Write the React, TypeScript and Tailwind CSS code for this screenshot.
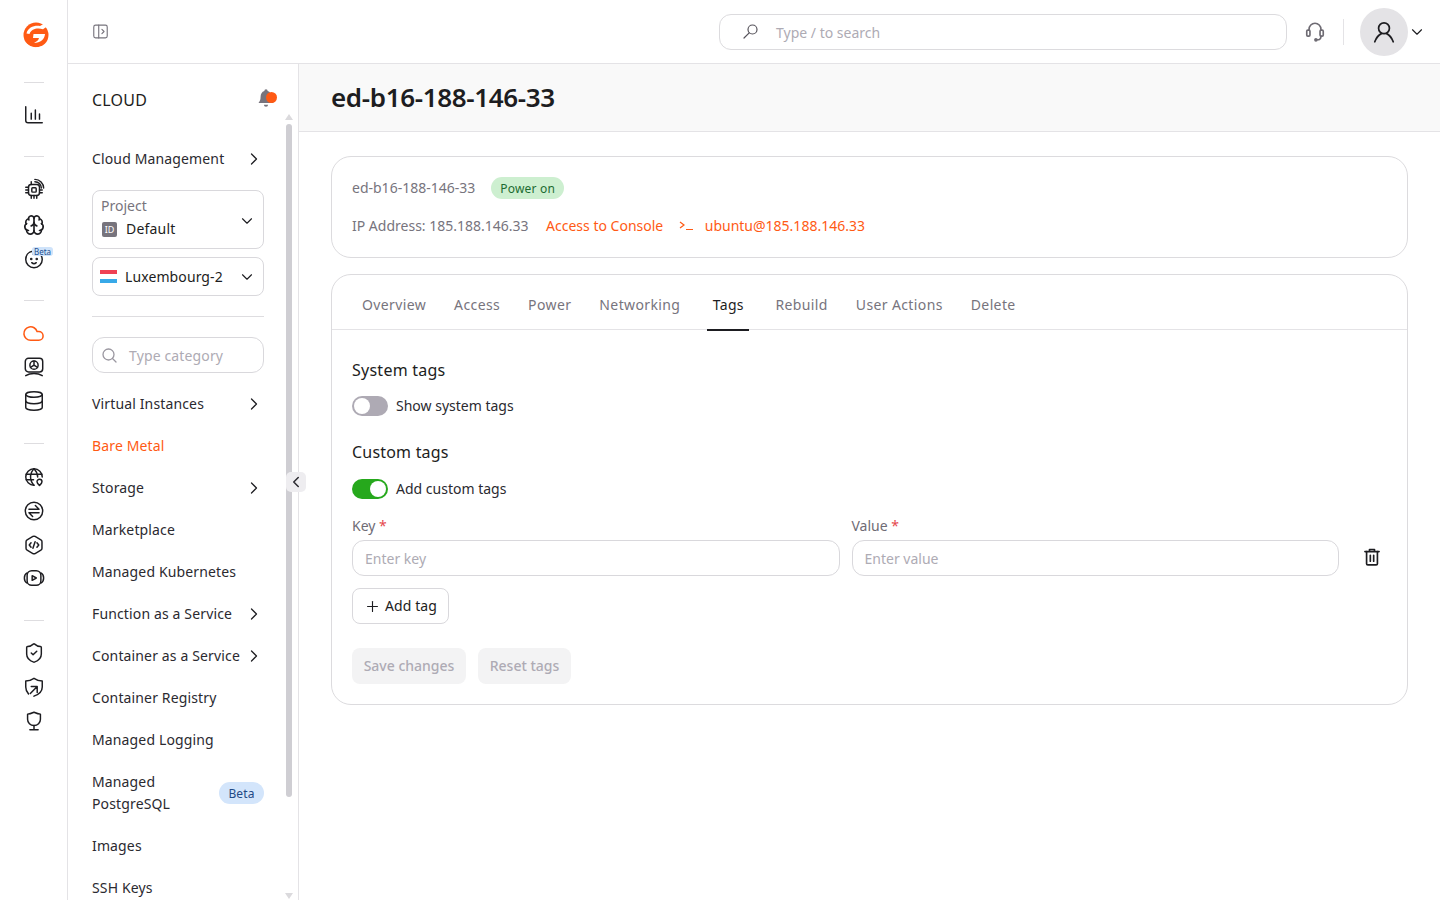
import type { ReactNode } from 'react';
import { Brain, ChevronDown, ChevronLeft, ChevronRight, Cloud, Database, Plus, ShieldCheck } from 'lucide-react';

function Ico({ children, size = 22, className = '' }: { children: ReactNode; size?: number; className?: string }) {
  return (
    <svg width={size} height={size} viewBox="0 0 24 24" fill="none" stroke="currentColor" strokeWidth="1.6" strokeLinecap="round" strokeLinejoin="round" className={className}>
      {children}
    </svg>
  );
}

function Logo() {
  return (
    <svg width="26" height="30" viewBox="0 0 26 30">
      <circle cx="13" cy="15" r="12.5" fill="#ff5a14" />
      <path d="M3.500 13.500 C5 7.500 11 5.200 17 6 L23 2.500 L26 0 L26 5 L20 9.200 C14.500 7.800 8.500 8.500 6.500 14 Z" fill="#fff" />
      <path d="M10.500 14 H22 C21.500 19.500 17.500 23 11 23 C14 21.500 15.500 20 16 18 H10 Z" fill="#fff" />
      <path d="M3 24 C7 28 13 28.500 19 26.500" fill="none" stroke="#fff" strokeWidth="1.100" />
    </svg>
  );
}

const railClass = 'h-[34px] flex items-center justify-center text-[#1d1d21]';

function Sep({ className }: { className: string }) {
  return <div className={`h-px w-5 bg-[#dedde0] ${className}`} />;
}

const items: { label: string; arrow?: boolean; active?: boolean }[] = [
  { label: 'Virtual Instances', arrow: true },
  { label: 'Bare Metal', active: true },
  { label: 'Storage', arrow: true },
  { label: 'Marketplace' },
  { label: 'Managed Kubernetes' },
  { label: 'Function as a Service', arrow: true },
  { label: 'Container as a Service', arrow: true },
  { label: 'Container Registry' },
  { label: 'Managed Logging' },
];

function NavRow({ label, arrow, active }: { label: string; arrow?: boolean; active?: boolean }) {
  return (
    <div className={`h-[42px] flex items-center justify-between text-sm tracking-[0.14px] ${active ? 'text-[#ff5a14]' : 'text-[#2b2a30]'}`}>
      <span>{label}</span>
      {arrow && <ChevronRight size={20} strokeWidth={1.5} className="text-[#1d1d21]" />}
    </div>
  );
}

function Toggle({ on }: { on?: boolean }) {
  return (
    <div className={`w-9 h-5 rounded-full flex items-center px-[2px] ${on ? 'bg-[#26a81c] justify-end' : 'bg-[#aeaab4] justify-start'}`}>
      <div className="w-4 h-4 rounded-full bg-white" />
    </div>
  );
}

function Field({ label, placeholder }: { label: string; placeholder: string }) {
  return (
    <div className="flex-1">
      <div className="h-[22px] text-sm text-[#6f6c75] leading-[22px]">
        {label} <span className="text-[#e5484d]">*</span>
      </div>
      <div className="mt-[3px] h-9 rounded-xl border border-[#d9d8dc] px-3 pt-[2px] flex items-center text-sm text-[#aeabb4]">{placeholder}</div>
    </div>
  );
}

export default function App() {
  const tabs = ['Overview', 'Access', 'Power', 'Networking', 'Tags', 'Rebuild', 'User Actions', 'Delete'];
  return (
    <div className="flex h-screen w-[1440px] overflow-hidden bg-white font-['Noto_Sans',sans-serif]">
      <aside className="w-[68px] shrink-0 border-r border-[#e4e3e6] flex flex-col items-center">
        <div className="mt-[20px] h-[30px] flex items-center justify-center translate-x-[2px]"><Logo /></div>
        <Sep className="mt-[32px]" />
        <div className={`${railClass} mt-[15px]`}>
          <Ico>
            <path d="M3 3V18a2.500 2.500 0 0 0 2.500 2.500H21" />
            <path d="M9 10v6.500M13.500 6.500v10M18 11v5.500" />
          </Ico>
        </div>
        <Sep className="mt-[24px]" />
        <div className={`${railClass} mt-[15px]`}>
          <Ico>
            <rect x="6" y="7" width="12" height="12" rx="3" />
            <rect x="9.600" y="10.600" width="4.800" height="4.800" rx="1" />
            <path d="M3 10h3M3 13h3M3 16h3M9 19v3M12 19v3M15 19v3M9 4v3M21 13h-3M21 16h-3" />
            <path d="M13 4a7 7 0 0 1 7 7M13 1.500a9.500 9.500 0 0 1 9.500 9.500" />
          </Ico>
        </div>
        <div className={`${railClass} mt-[2px]`}><Brain size={22} strokeWidth={1.8} /></div>
        <div className={`${railClass} relative w-full`}>
          <Ico>
            <path d="M10.500 3.500C6 4.200 3 7.800 3 12.500a9 9 0 0 0 18 0c0-2-.6-3.600-1.600-5" />
            <path d="M10.500 3.500a2 2 0 0 1 2.500 1.800c0 1.400-1.600 1.800-2.300.9" />
            <circle cx="9" cy="12" r=".6" fill="currentColor" />
            <circle cx="15" cy="12" r=".6" fill="currentColor" />
            <path d="M9.500 16c1.400 1.200 3.600 1.200 5 0" />
          </Ico>
          <span className="absolute left-[32px] top-[5px] h-[9px] w-[21px] rounded-[3px] bg-[#cfe3fa] text-[8px] leading-[9px] text-center text-[#24508f]">Beta</span>
        </div>
        <Sep className="mt-[24px]" />
        <div className={`${railClass} mt-[15px] !text-[#ff5a14]`}><Cloud size={23} strokeWidth={1.6} /></div>
        <div className={railClass}>
          <Ico>
            <rect x="2.500" y="2.500" width="19" height="15" rx="3.500" />
            <circle cx="12" cy="10" r="4.500" />
            <path d="M12 10V5.500M12 10l-3.800 2.400M12 10l3.800 2.400" />
            <path d="M3 21.500c3-2 5-2.500 9-2.500s6 .5 9 2.500" />
          </Ico>
        </div>
        <div className={railClass}><Database size={22} strokeWidth={1.6} /></div>
        <Sep className="mt-[25px]" />
        <div className={`${railClass} mt-[16px]`}>
          <Ico>
            <path d="M12 21a9 9 0 1 1 9-9" />
            <path d="M3.500 9h17M3.500 15h8M12 3c-5 5-5 13 0 18M12 3c2.600 2.600 3.900 5.800 4 9" />
            <path d="M18 14.500a2.700 2.700 0 0 1 2.700 2.700c0 1.600-1.600 3-2.700 4-1.100-1-2.700-2.400-2.700-4a2.700 2.700 0 0 1 2.700-2.700Z" />
          </Ico>
        </div>
        <div className={railClass}>
          <Ico>
            <circle cx="12" cy="12" r="9.500" />
            <path d="M6.500 10h11l-4-4M17.500 14h-11l4 4" />
          </Ico>
        </div>
        <div className={railClass}>
          <Ico>
            <path d="M10.800 2.700a2.400 2.400 0 0 1 2.400 0l6.300 3.600A2.400 2.400 0 0 1 20.700 8.400v7.200a2.400 2.400 0 0 1-1.200 2.100l-6.300 3.600a2.400 2.400 0 0 1-2.400 0l-6.300-3.600a2.400 2.400 0 0 1-1.200-2.100V8.400a2.400 2.400 0 0 1 1.200-2.100Z" />
            <path d="M8.800 9.500L6.800 12l2 2.500M15.200 9.500l2 2.500-2 2.500M13.200 8.500l-2.400 7" />
          </Ico>
        </div>
        <div className={`${railClass} -mt-px`}>
          <Ico>
            <rect x="4.500" y="4" width="15" height="16" rx="5" />
            <path d="M4.500 6.500C2.500 7.500 1.500 9.500 1.500 12s1 4.500 3 5.500M19.500 6.500c2 1 3 3 3 5.500s-1 4.500-3 5.500" />
            <path d="M10 9.500l4.500 2.500-4.500 2.500Z" />
          </Ico>
        </div>
        <Sep className="mt-[25px]" />
        <div className={`${railClass} mt-[15px]`}><ShieldCheck size={22} strokeWidth={1.6} /></div>
        <div className={railClass}>
          <Ico>
            <path d="M6 19.500C4 17.500 3 15 3 12V5.500C6 5.500 9 4.500 12 2.500c3 2 6 3 9 3V12c0 5-3.500 8-9 10" />
            <path d="M8 19l7.500-7.500M9 11.500h6.500V18" />
          </Ico>
        </div>
        <div className={railClass}>
          <Ico>
            <path d="M12 2.500c3.500 1.500 5.500 2 7 2v5.500c0 4-3 7-7 7s-7-3-7-7V4.500c1.500 0 3.500-.5 7-2Z" />
            <path d="M12 17v4M7.500 21.500h9" />
          </Ico>
        </div>
      </aside>

      <div className="flex-1 min-w-0 flex flex-col">
        <header className="h-[64px] shrink-0 border-b border-[#e4e3e6] flex items-center">
          <div className="ml-[24px] text-[#77747d]">
            <Ico size={17}>
              <rect x="2.500" y="3" width="19" height="18" rx="2.500" />
              <path d="M9.500 3v18M14 9l3 3-3 3" />
            </Ico>
          </div>
          <div className="ml-[610px] w-[568px] h-9 rounded-xl border border-[#dcdbde] flex items-center">
            <svg width="17" height="17" viewBox="0 0 17 17" fill="none" stroke="#55525a" strokeWidth="1.200" strokeLinecap="round" className="ml-[22px]">
              <circle cx="10.500" cy="6.500" r="4.500" />
              <path d="M7.200 9.800L2 15" />
            </svg>
            <span className="ml-[17px] pt-[2px] text-sm text-[#aeabb4]">Type / to search</span>
          </div>
          <div className="ml-[17px] text-[#6e6b73]">
            <Ico size={22}>
              <path d="M5.500 10V9a6.500 6.500 0 0 1 13 0v1" strokeWidth="1.800" />
              <rect x="3" y="10" width="3.500" height="6.500" rx="1.200" strokeWidth="1.800" />
              <rect x="17.500" y="10" width="3.500" height="6.500" rx="1.200" strokeWidth="1.800" />
              <path d="M18.500 16.500c0 2.500-1.500 4-4 4" strokeWidth="1.800" />
              <circle cx="13" cy="20.500" r="1.200" fill="currentColor" />
            </Ico>
          </div>
          <div className="ml-[17px] h-[26px] w-px bg-[#e4e3e6]" />
          <div className="ml-[16px] h-12 w-12 rounded-full bg-[#e4e3e6] flex items-center justify-center text-[#1d1d21]">
            <Ico size={26}>
              <circle cx="12" cy="8.500" r="5" />
              <path d="M3.500 21c1.500-4 4-6.500 6-7.500M20.500 21c-1.500-4-4-6.500-6-7.500" />
            </Ico>
          </div>
          <ChevronDown size={18} strokeWidth={1.5} className="text-[#1d1d21]" />
        </header>

        <div className="flex-1 min-h-0 flex">
          <nav className="relative w-[231px] shrink-0 border-r border-[#e4e3e6]">
            <div className="h-full overflow-hidden pl-[24px] pr-[34px]">
              <div className="h-[74px] flex items-center justify-between">
                <span className="text-base tracking-[0.2px] text-[#1d1d21] mb-[2px]">CLOUD</span>
                <span className="relative mr-[-12px] mt-[-6px] text-[#77747d]">
                  <svg width="20" height="20" viewBox="0 0 24 24" fill="currentColor">
                    <path d="M12 1.500a2 2 0 0 1 2 2c3 1 4.500 3.500 4.500 7 0 4 1 5.500 2.500 7.500H3c1.500-2 2.500-3.500 2.500-7.500 0-3.500 1.500-6 4.500-7a2 2 0 0 1 2-2ZM9.500 20h5a2.500 2.500 0 0 1-5 0Z" />
                  </svg>
                  <span className="absolute left-[10px] top-[4px] h-[11px] w-[11px] rounded-full bg-[#ff5a14]" />
                </span>
              </div>
              <div className="h-[42px] flex items-center justify-between text-sm tracking-[0.14px] text-[#2b2a30]">
                <span>Cloud Management</span>
                <ChevronRight size={20} strokeWidth={1.5} className="text-[#1d1d21]" />
              </div>
              <div className="mt-[10px] h-[59px] rounded-lg border border-[#d9d8dc] pl-2 pr-[7px] flex items-center justify-between">
                <div className="mb-[4px]">
                  <div className="text-sm leading-[20px] text-[#77747d]">Project</div>
                  <div className="mt-[3px] flex items-center text-sm leading-[20px] tracking-[0.2px] text-[#1d1d21]">
                    <span className="ml-px w-[15px] h-[15px] rounded-[2px] bg-[#77747d] text-white text-[9px] leading-[15px] text-center tracking-normal">ID</span>
                    <span className="ml-[9px]">Default</span>
                  </div>
                </div>
                <ChevronDown size={18} strokeWidth={1.5} className="text-[#1d1d21] mt-[2px]" />
              </div>
              <div className="mt-2 h-[39px] rounded-lg border border-[#d9d8dc] pl-2 pr-[7px] flex items-center justify-between">
                <div className="flex items-center text-sm tracking-[0.1px] text-[#1d1d21]">
                  <span className="-ml-px w-[17px] flex flex-col">
                    <span className="h-[4px] bg-[#ef4154]" />
                    <span className="h-[5px] bg-white" />
                    <span className="h-[4px] bg-[#38a9e8]" />
                  </span>
                  <span className="ml-2">Luxembourg-2</span>
                </div>
                <ChevronDown size={18} strokeWidth={1.5} className="text-[#1d1d21]" />
              </div>
              <div className="mt-5 h-px bg-[#dedde0]" />
              <div className="mt-5 h-9 rounded-xl border border-[#d9d8dc] flex items-center text-sm tracking-[0.14px] text-[#aeabb4]">
                <svg width="17" height="17" viewBox="0 0 17 17" fill="none" stroke="#9a97a0" strokeWidth="1.300" strokeLinecap="round" className="ml-[8px]">
                  <circle cx="7.500" cy="7.500" r="5.500" />
                  <path d="M11.500 11.500L15 15" />
                </svg>
                <span className="ml-[11px] pt-[2px]">Type category</span>
              </div>
              <div className="mt-[10px]">
                {items.map((item) => (
                  <NavRow key={item.label} {...item} />
                ))}
                <div className="h-[64px] flex items-center justify-between text-sm leading-[22px] tracking-[0.14px] text-[#2b2a30]">
                  <span>
                    Managed
                    <br />
                    PostgreSQL
                  </span>
                  <span className="h-[22px] w-[45px] rounded-full bg-[#d3e5fb] text-xs leading-[24px] text-center text-[#1f4a86]">Beta</span>
                </div>
                <NavRow label="Images" />
                <NavRow label="SSH Keys" />
              </div>
            </div>
            <div className="absolute left-[218px] top-[60px] h-[673px] w-[6px] rounded-full bg-[#cfced3]" />
            <div className="absolute left-[217px] top-[50px] h-0 w-0 border-x-4 border-b-[6px] border-x-transparent border-b-[#dbdadd]" />
            <div className="absolute left-[217px] top-[829px] h-0 w-0 border-x-4 border-t-[6px] border-x-transparent border-t-[#dbdadd]" />
            <div className="absolute left-[218px] top-[408px] h-[20px] w-[20px] rounded-[5px] bg-[#eeedf0] flex items-center justify-center text-[#2b2a30]">
              <ChevronLeft size={18} strokeWidth={2} />
            </div>
          </nav>

          <main className="flex-1 min-w-0">
            <div className="h-[68px] bg-[#f9f9f9] border-b border-[#e4e3e6] px-8 flex items-center">
              <h1 className="text-[26px] font-semibold text-[#1d1d21] tracking-[-0.35px] mt-[-1px]">ed-b16-188-146-33</h1>
            </div>
            <div className="px-8 pt-6">
              <section className="h-[102px] rounded-[20px] border border-[#dcdbde] px-5 pt-[20px]">
                <div className="flex items-center h-[22px] text-sm text-[#77747d]">
                  <span>ed-b16-188-146-33</span>
                  <span className="ml-4 h-[22px] rounded-full bg-[#cdefd0] px-[9px] text-xs leading-[24px] tracking-[0.2px] text-[#1c6b32]">Power on</span>
                </div>
                <div className="mt-4 flex items-center h-[22px] text-sm text-[#77747d]">
                  <span>IP Address: 185.188.146.33</span>
                  <span className="ml-[17.500px] text-[#ff5a14]">Access to Console</span>
                  <svg width="16" height="16" viewBox="0 0 16 16" fill="none" stroke="#ff5a14" strokeWidth="1.200" className="ml-[16px]">
                    <path d="M1 4l4 3-4 3M7 11.500h7" />
                  </svg>
                  <span className="ml-[9.500px] text-[#ff5a14]">ubuntu@185.188.146.33</span>
                </div>
              </section>

              <section className="mt-4 h-[431px] rounded-[20px] border border-[#dcdbde]">
                <div className="h-[55px] border-b border-[#e4e3e6] pl-[30px] flex gap-[28px]">
                  {tabs.map((t) =>
                    t === 'Tags' ? (
                      <div key={t} className="relative -ml-[1px] -mr-[2px] px-[5.500px] pt-[4px] h-[55px] flex items-center text-sm tracking-[0.3px] text-[#1d1d21]">
                        {t}
                        <span className="absolute left-0 right-0 bottom-[-1px] h-[2px] bg-[#1d1d21]" />
                      </div>
                    ) : (
                      <div key={t} className="pt-[4px] h-[55px] flex items-center text-sm tracking-[0.38px] text-[#77747d]">{t}</div>
                    ),
                  )}
                </div>
                <div className="px-5 pt-[28px]">
                  <h2 className="text-base leading-[24px] tracking-[0.25px] text-[#1d1d21]">System tags</h2>
                  <div className="mt-[14px] flex items-center h-5 text-sm text-[#2b2a30]">
                    <Toggle />
                    <span className="ml-2">Show system tags</span>
                  </div>
                  <h2 className="mt-[24px] text-base leading-[24px] tracking-[0.2px] text-[#1d1d21]">Custom tags</h2>
                  <div className="mt-[15px] flex items-center h-5 text-sm text-[#2b2a30]">
                    <Toggle on />
                    <span className="ml-2">Add custom tags</span>
                  </div>
                  <div className="mt-[16px] flex items-start">
                    <div className="flex-1 flex gap-3">
                      <Field label="Key" placeholder="Enter key" />
                      <Field label="Value" placeholder="Enter value" />
                    </div>
                    <div className="w-[48px] h-[34px] mt-[25px] flex items-center justify-end pr-[5px] text-[#1d1d21]">
                      <Ico size={20}>
                        <path d="M3.500 5.500h17M9 5.500V3h6v2.500" strokeWidth="2" />
                        <path d="M5.500 5.500V20a1.500 1.500 0 0 0 1.500 1.500h10a1.500 1.500 0 0 0 1.500-1.500V5.500" strokeWidth="2" />
                        <path d="M10 10v7M14 10v7" strokeWidth="2" />
                      </Ico>
                    </div>
                  </div>
                  <button className="mt-3 h-9 w-[97px] rounded-lg border border-[#d9d8dc] flex items-center justify-center gap-[4px] text-sm tracking-[0.1px] text-[#1d1d21]">
                    <Plus size={17} strokeWidth={1.6} />
                    Add tag
                  </button>
                  <div className="mt-6 flex gap-3">
                    <button className="h-9 w-[114px] rounded-lg bg-[#f3f3f4] text-sm font-medium text-[#aeabb4]">Save changes</button>
                    <button className="h-9 w-[93px] rounded-lg bg-[#f3f3f4] text-sm font-medium text-[#aeabb4]">Reset tags</button>
                  </div>
                </div>
              </section>
            </div>
          </main>
        </div>
      </div>
    </div>
  );
}
